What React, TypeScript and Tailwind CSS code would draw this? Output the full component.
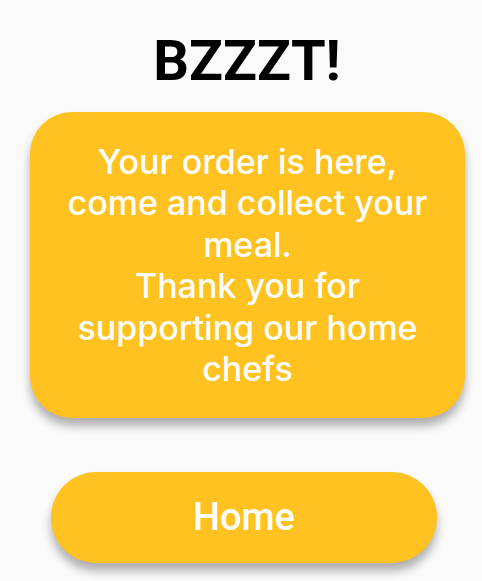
export default function App() {
  return (
    <div className="h-[581px] w-[482px] overflow-hidden bg-[#fafafa] font-['Roboto',sans-serif]">
      <div className="flex h-[112px] items-center justify-center pl-[12px] pt-[10px]">
        <h1 className="text-[56px] leading-none font-bold text-black">BZZZT!</h1>
      </div>

      <div className="ml-[30px] flex h-[306px] w-[435px] items-center justify-center rounded-[42px] bg-[#ffc220] shadow-[0_8px_10px_rgba(0,0,0,0.3)]">
        <p className="w-[372px] text-center font-['Inter',sans-serif] text-[34px] leading-[41.5px] font-medium text-white">
          Your order is here, come and collect your meal.
          <br />
          Thank you for supporting our home chefs
        </p>
      </div>

      <div className="mt-[54px] ml-[51px] flex h-[91px] w-[386px] items-center justify-center rounded-full bg-[#ffc220] shadow-[0_8px_10px_rgba(0,0,0,0.3)]">
        <span className="text-[38px] font-medium text-white">Home</span>
      </div>
    </div>
  );
}
